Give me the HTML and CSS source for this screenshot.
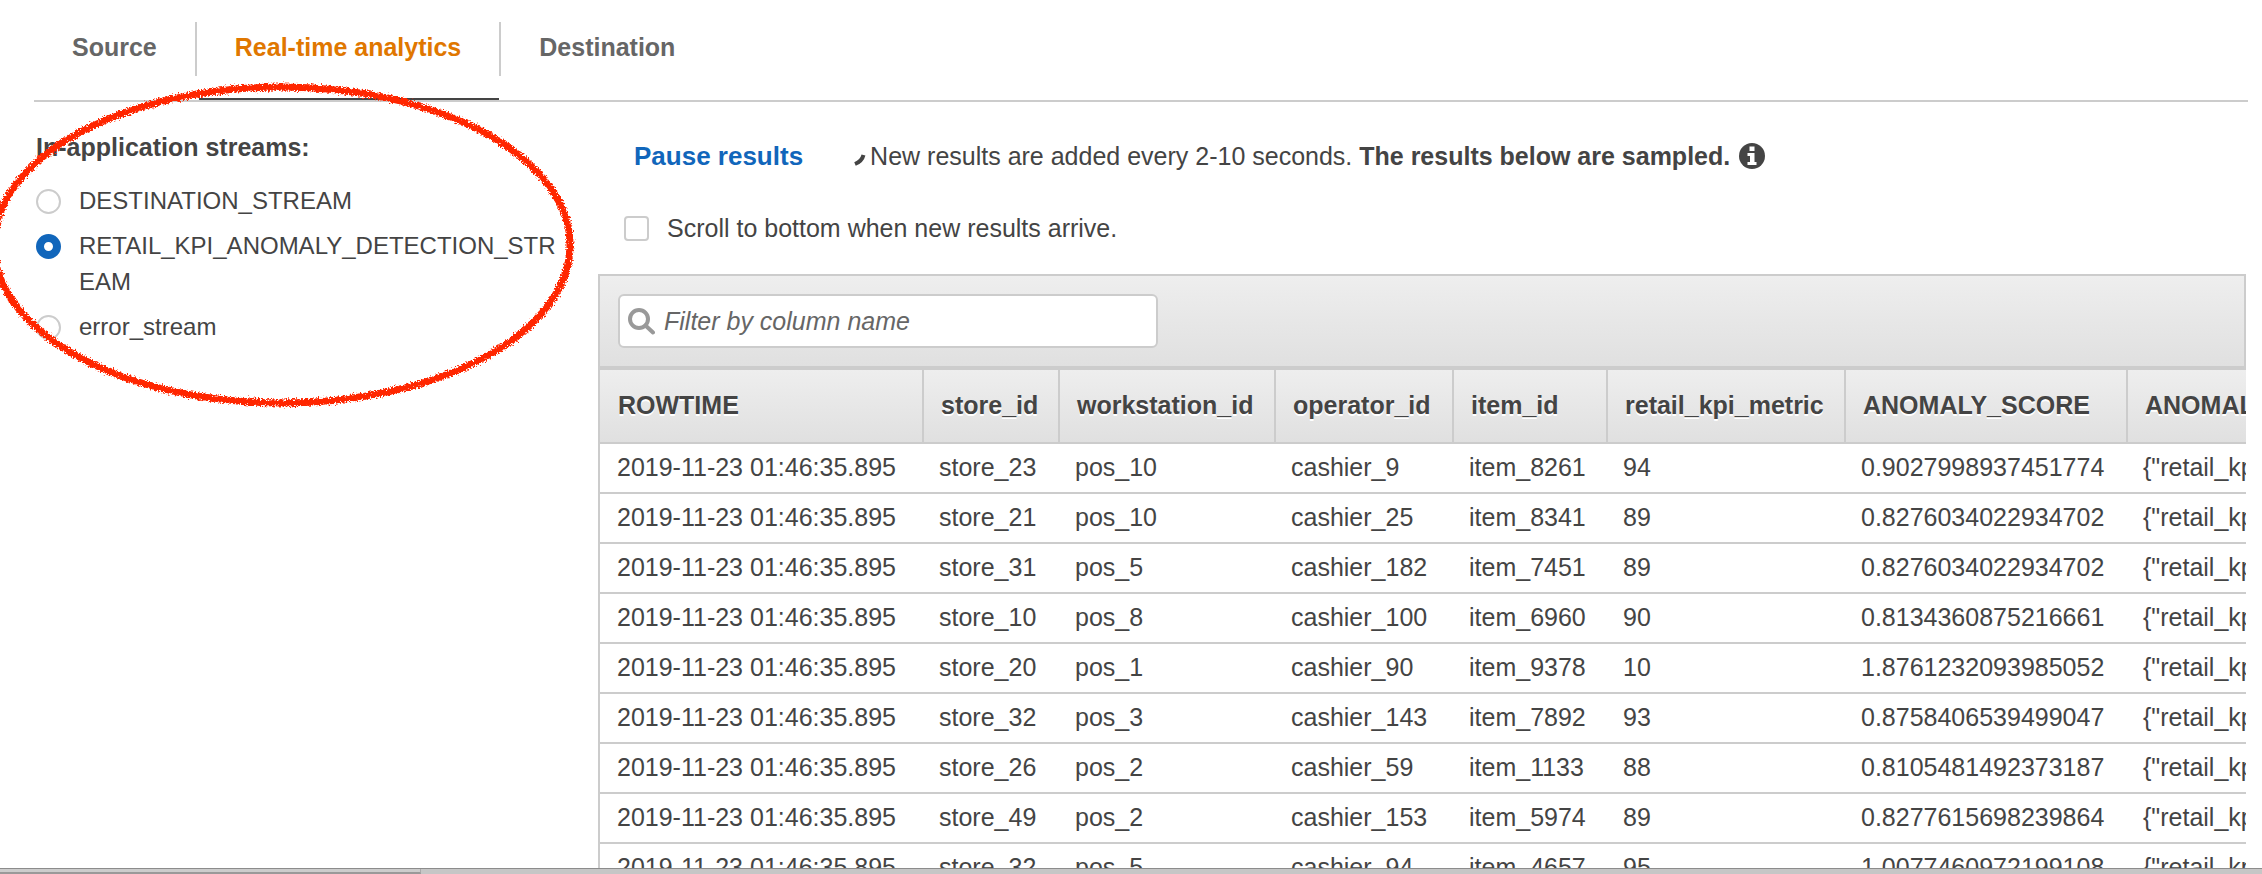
FILE: index.html
```
<!DOCTYPE html>
<html lang="en">
<head>
<meta charset="utf-8">
<title>Real-time analytics</title>
<link rel="stylesheet" href="styles.css">
</head>
<body>
<div class="page">
  <nav class="tabs">
    <a class="tab" href="#source">Source</a>
    <a class="tab tab-active" href="#analytics" aria-current="page">Real-time analytics</a>
    <a class="tab" href="#destination">Destination</a>
  </nav>

  <main class="content">
    <fieldset class="streams">
      <legend class="streams-title">In-application streams:</legend>
      <label class="stream"><input class="radio" type="radio" name="stream"><span>DESTINATION_STREAM</span></label>
      <label class="stream"><input class="radio" type="radio" name="stream" checked><span>RETAIL_KPI_ANOMALY_DETECTION_STREAM</span></label>
      <label class="stream"><input class="radio" type="radio" name="stream"><span>error_stream</span></label>
    </fieldset>

    <section class="results">
      <div class="status">
        <button class="pause" type="button">Pause results</button>
        <p class="notice">
          <svg class="spinner" viewBox="0 0 14 14" aria-hidden="true"><path d="M11.500 2C10.500 6 8 9 3 11" /></svg>
          <span>New results are added every 2-10 seconds. <strong>The results below are sampled.</strong></span>
          <svg class="info" viewBox="0 0 26 26" role="img" aria-label="Information"><circle cx="13" cy="13" r="13"/><path d="M10.500 3.500h5v4.500h-5zM8.500 10h7v9h2v3h-9v-3h2.500v-6h-2.500z"/></svg>
        </p>
      </div>
      <label class="scroll"><input class="check" type="checkbox"><span>Scroll to bottom when new results arrive.</span></label>

      <div class="panel">
        <div class="toolbar">
          <div class="search">
            <svg class="glass" viewBox="0 0 27 27" aria-hidden="true"><circle cx="11" cy="11" r="9"/><path d="M17.500 17.500L25 24.500"/></svg>
            <input class="filter" type="text" placeholder="Filter by column name" aria-label="Filter by column name">
          </div>
        </div>
        <table class="grid">
          <colgroup><col class="c-time"><col class="c-store"><col class="c-work"><col class="c-oper"><col class="c-item"><col class="c-kpi"><col class="c-score"><col></colgroup>
          <thead>
            <tr><th>ROWTIME</th><th>store_id</th><th>workstation_id</th><th>operator_id</th><th>item_id</th><th>retail_kpi_metric</th><th>ANOMALY_SCORE</th><th>ANOMALY_SCORE_EXPLANATION</th></tr>
          </thead>
          <tbody>
            <tr><td>2019-11-23 01:46:35.895</td><td>store_23</td><td>pos_10</td><td>cashier_9</td><td>item_8261</td><td>94</td><td>0.9027998937451774</td><td>{"retail_kpi_metric"</td></tr>
            <tr><td>2019-11-23 01:46:35.895</td><td>store_21</td><td>pos_10</td><td>cashier_25</td><td>item_8341</td><td>89</td><td>0.8276034022934702</td><td>{"retail_kpi_metric"</td></tr>
            <tr><td>2019-11-23 01:46:35.895</td><td>store_31</td><td>pos_5</td><td>cashier_182</td><td>item_7451</td><td>89</td><td>0.8276034022934702</td><td>{"retail_kpi_metric"</td></tr>
            <tr><td>2019-11-23 01:46:35.895</td><td>store_10</td><td>pos_8</td><td>cashier_100</td><td>item_6960</td><td>90</td><td>0.8134360875216661</td><td>{"retail_kpi_metric"</td></tr>
            <tr><td>2019-11-23 01:46:35.895</td><td>store_20</td><td>pos_1</td><td>cashier_90</td><td>item_9378</td><td>10</td><td>1.8761232093985052</td><td>{"retail_kpi_metric"</td></tr>
            <tr><td>2019-11-23 01:46:35.895</td><td>store_32</td><td>pos_3</td><td>cashier_143</td><td>item_7892</td><td>93</td><td>0.8758406539499047</td><td>{"retail_kpi_metric"</td></tr>
            <tr><td>2019-11-23 01:46:35.895</td><td>store_26</td><td>pos_2</td><td>cashier_59</td><td>item_1133</td><td>88</td><td>0.8105481492373187</td><td>{"retail_kpi_metric"</td></tr>
            <tr><td>2019-11-23 01:46:35.895</td><td>store_49</td><td>pos_2</td><td>cashier_153</td><td>item_5974</td><td>89</td><td>0.8277615698239864</td><td>{"retail_kpi_metric"</td></tr>
            <tr><td>2019-11-23 01:46:35.895</td><td>store_32</td><td>pos_5</td><td>cashier_94</td><td>item_4657</td><td>95</td><td>1.0077460972199108</td><td>{"retail_kpi_metric"</td></tr>
          </tbody>
        </table>
      </div>
    </section>
  </main>

  <footer class="dock"><div class="dock-tab"></div></footer>

  <svg class="marker" viewBox="0 0 590 420" aria-hidden="true">
    <defs>
      <filter id="crayon" x="-5%" y="-5%" width="110%" height="110%">
        <feTurbulence type="fractalNoise" baseFrequency="0.6" numOctaves="2" seed="4" result="noise"/>
        <feDisplacementMap in="SourceGraphic" in2="noise" scale="7" xChannelSelector="R" yChannelSelector="G"/>
      </filter>
    </defs>
    <ellipse cx="282" cy="245" rx="288" ry="158" filter="url(#crayon)"/>
  </svg>
</div>
</body>
</html>
```
FILE: styles.css
```
* { box-sizing: border-box; }

body {
  margin: 0;
  background: #fff;
  color: #444;
  font: 25px/36px "Liberation Sans", Arial, sans-serif;
}

.page {
  position: relative;
  display: flex;
  flex-direction: column;
  height: 100vh;
  overflow: hidden;
}

.tabs {
  display: flex;
  flex: none;
  margin: 0 14px 0 34px;
  padding-top: 22px;
  border-bottom: 2px solid #ccc;
}

.tab {
  position: relative;
  padding: 7px 38px 11px;
  margin-bottom: 24px;
  color: #666;
  font-weight: bold;
  text-decoration: none;
}

.tab + .tab { border-left: 2px solid #ccc; }

.tab-active { color: #e07700; }

.tab-active::after {
  content: "";
  position: absolute;
  left: 2px;
  right: 0;
  bottom: -24px;
  height: 2px;
  background: #444;
}

.content {
  display: flex;
  flex: 1;
  min-height: 0;
  padding: 0 16px 0 36px;
  overflow: hidden;
}

.streams {
  display: flex;
  flex: none;
  flex-direction: column;
  gap: 9px;
  width: 526px;
  margin: 0;
  padding: 18px 0 0;
  border: 0;
}

.streams-title {
  padding: 27px 0 0;
  font-weight: bold;
}

.stream {
  display: flex;
  gap: 18px;
  font-size: 24px;
  word-break: break-all;
}

.radio,
.check {
  flex: none;
  width: 25px;
  height: 25px;
  margin: 6px 0 0;
  appearance: none;
  background: #fff;
  border: 2px solid #ccc;
}

.radio { border-radius: 50%; }

.radio:checked { border: 8px solid #1166bb; }

.check { border-radius: 4px; }

.results {
  flex: 1;
  min-width: 0;
  margin-left: 36px;
}

.status {
  display: flex;
  align-items: center;
  gap: 49px;
  padding: 36px 0 0 36px;
}

.pause {
  padding: 0;
  background: none;
  border: 0;
  color: #1166bb;
  font: inherit;
  font-size: 26px;
  font-weight: bold;
}

.notice {
  display: flex;
  align-items: center;
  gap: 4px;
  margin: 0;
}

.spinner {
  width: 14px;
  height: 14px;
  margin-top: 8px;
  fill: none;
  stroke: #444;
  stroke-width: 4;
}

.info {
  width: 26px;
  height: 26px;
  margin-left: 5px;
}

.info circle { fill: #444; }
.info path { fill: #fff; }

.scroll {
  display: flex;
  gap: 18px;
  padding: 36px 0 28px 26px;
}

.panel {
  border-top: 2px solid #ccc;
  border-left: 2px solid #ccc;
  overflow: hidden;
}

.toolbar {
  padding: 18px;
  background: linear-gradient(#eee, #e0e0e0);
  border-right: 2px solid #ccc;
  border-bottom: 4px solid #ccc;
}

.search {
  display: flex;
  align-items: center;
  gap: 9px;
  width: 540px;
  height: 54px;
  padding-left: 8px;
  background: #fff;
  border: 2px solid #ccc;
  border-radius: 6px;
}

.glass {
  flex: none;
  width: 27px;
  height: 27px;
  fill: none;
  stroke: #999;
  stroke-width: 4;
  stroke-linecap: round;
}

.filter {
  flex: 1;
  min-width: 0;
  padding: 0;
  background: none;
  border: 0;
  color: #444;
  font: inherit;
}

.filter::placeholder {
  color: #666;
  font-style: italic;
  opacity: 1;
}

.grid {
  width: 100%;
  table-layout: fixed;
  border-spacing: 0;
  white-space: nowrap;
}

.c-time { width: 322px; }
.c-store { width: 136px; }
.c-work { width: 216px; }
.c-oper { width: 178px; }
.c-item { width: 154px; }
.c-kpi { width: 238px; }
.c-score { width: 282px; }

.grid th,
.grid td {
  overflow: hidden;
  border-bottom: 2px solid #ccc;
  text-align: left;
}

.grid th {
  height: 74px;
  padding: 0 0 2px 18px;
  background: linear-gradient(#eee, #e0e0e0);
  text-shadow: 0 2px 0 #fff;
}

.grid th + th {
  padding-left: 17px;
  border-left: 2px solid #ccc;
}

.grid td {
  height: 50px;
  padding: 0 0 2px 17px;
}

.dock {
  flex: none;
  height: 6px;
  background: #c6c6c6;
  border-top: 1px solid #8c8c8c;
}

.dock-tab {
  width: 421px;
  height: 5px;
  background: #ccc;
  border-right: 1px solid #aaa;
  border-bottom: 2px solid #999;
}

.marker {
  position: absolute;
  top: 0;
  left: 0;
  width: 590px;
  height: 420px;
  pointer-events: none;
}

.marker ellipse {
  fill: none;
  stroke: #ff2600;
  stroke-width: 7;
}
```
